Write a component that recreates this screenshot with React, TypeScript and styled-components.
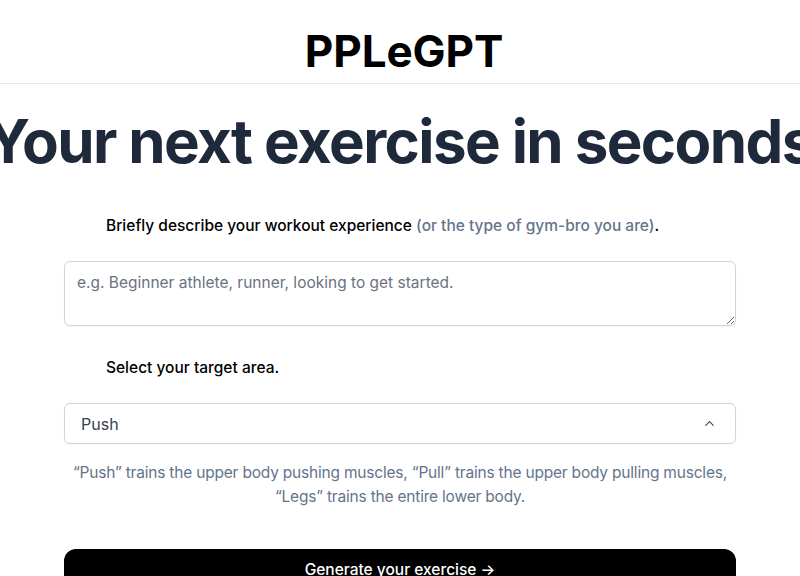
import React, { useState } from 'react';
import styled, { createGlobalStyle } from 'styled-components';
import { ChevronUp } from 'lucide-react';

const GlobalStyle = createGlobalStyle`
  html, body {
    margin: 0;
    padding: 0;
    background: #ffffff;
    overflow-x: hidden;
  }
  body {
    font-family: Inter, "Noto Sans", "Liberation Sans", sans-serif;
    color: #000;
  }
  * {
    box-sizing: border-box;
  }
`;

const Page = styled.div`
  display: flex;
  flex-direction: column;
  align-items: center;
  min-height: 576px;
`;

const Header = styled.header`
  width: 100%;
  height: 84px;
  display: flex;
  align-items: flex-end;
  justify-content: center;
  padding: 0 0 4px 8px;
  border-bottom: 1px solid #e5e7eb;
`;

const Logo = styled.h1`
  margin: 0;
  font-size: 44px;
  line-height: 56px;
  font-weight: 700;
  letter-spacing: -0.1px;
  color: #000;
`;

const Main = styled.main`
  display: flex;
  flex-direction: column;
  align-items: center;
  width: 100%;
`;

const Headline = styled.h2`
  margin: 21px 0 0;
  font-size: 60px;
  line-height: 72px;
  font-weight: 700;
  letter-spacing: -1.6px;
  color: #1e293b;
  white-space: nowrap;
`;

const Form = styled.div`
  width: 672px;
  display: flex;
  flex-direction: column;
  margin-top: 33px;
`;

const StepRow = styled.div`
  display: flex;
  align-items: center;
  height: 30px;
  padding-left: 42px;
`;

const StepLabel = styled.p`
  margin: 0;
  font-size: 15.5px;
  font-weight: 500;
  color: #000;
`;

const Hint = styled.span`
  color: #64748b;
`;

const TextArea = styled.textarea`
  margin-top: 21px;
  width: 100%;
  height: 65px;
  border: 1px solid #d1d5db;
  border-radius: 6px;
  padding: 10px 12px;
  font-family: inherit;
  font-size: 15.5px;
  line-height: 22px;
  color: #111827;
  box-shadow: 0 1px 2px rgba(0, 0, 0, 0.05);
  outline: none;
  &::placeholder {
    color: #6b7280;
  }
`;

const SecondStep = styled(StepRow)`
  margin-top: 26px;
`;

const SelectBox = styled.div`
  margin-top: 21px;
  height: 41px;
  width: 100%;
  border: 1px solid #d1d5db;
  border-radius: 6px;
  display: flex;
  align-items: center;
  justify-content: space-between;
  padding: 0 18px 0 16px;
  font-size: 16px;
  color: #374151;
  box-shadow: 0 1px 2px rgba(0, 0, 0, 0.05);
  cursor: pointer;
`;

const Description = styled.p`
  margin: 17px 0 0;
  text-align: center;
  font-size: 15.5px;
  line-height: 24px;
  letter-spacing: -0.2px;
  color: #64748b;
`;

const GenerateButton = styled.button`
  margin-top: 40px;
  width: 100%;
  height: 42px;
  border: none;
  border-radius: 12px;
  background: #000;
  color: #fff;
  font-family: inherit;
  font-size: 15.5px;
  font-weight: 500;
  padding-bottom: 2px;
  cursor: pointer;
`;

const App = () => {
  const [bio, setBio] = useState('');
  const [area] = useState('Push');

  return (
    <>
      <GlobalStyle />
      <Page>
        <Header>
          <Logo>PPLeGPT</Logo>
        </Header>
        <Main>
          <Headline>Your next exercise in seconds</Headline>
          <Form>
            <StepRow>
              <StepLabel>
                Briefly describe your workout experience{' '}
                <Hint>(or the type of gym-bro you are)</Hint>.
              </StepLabel>
            </StepRow>
            <TextArea
              rows={2}
              value={bio}
              onChange={(e) => setBio(e.target.value)}
              placeholder="e.g. Beginner athlete, runner, looking to get started."
            />
            <SecondStep>
              <StepLabel>Select your target area.</StepLabel>
            </SecondStep>
            <SelectBox>
              <span>{area}</span>
              <ChevronUp size={15} strokeWidth={1.75} color="#374151" />
            </SelectBox>
            <Description>
              “Push” trains the upper body pushing muscles, “Pull” trains the upper body pulling muscles,
              “Legs” trains the entire lower body.
            </Description>
            <GenerateButton>Generate your exercise →</GenerateButton>
          </Form>
        </Main>
      </Page>
    </>
  );
};

export default App;
